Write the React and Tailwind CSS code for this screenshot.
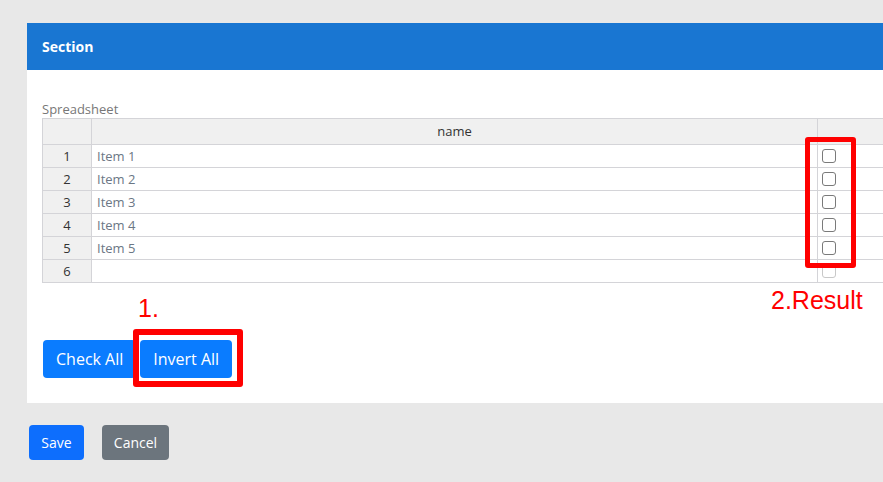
import React from "react";

const items = ["Item 1", "Item 2", "Item 3", "Item 4", "Item 5", ""];

export default function App() {
  return (
    <div
      className="w-[883px] h-[482px] overflow-hidden bg-[#e8e8e8] relative"
      style={{ fontFamily: '"Open Sans", "Noto Sans", sans-serif' }}
    >
      <div className="pt-[23px] pl-[27px]">
        <div className="w-[900px] bg-white">
          <div className="h-[47px] bg-[#1976d2] flex items-center px-[15px]">
            <span className="text-white font-bold text-[14px]">Section</span>
          </div>
          <div className="pt-[31px] pl-[15px] pb-[25px] relative">
            <div className="text-[13px] text-[#777] leading-[17px]">Spreadsheet</div>
            <table className="border-collapse text-[13px] table-fixed w-[845px]">
              <colgroup>
                <col className="w-[49px]" />
                <col className="w-[726px]" />
                <col className="w-[70px]" />
              </colgroup>
              <thead>
                <tr className="h-[26px] bg-[#f0f0f0]">
                  <th className="border border-[#d4d4d8] font-normal"></th>
                  <th className="border border-[#d4d4d8] font-normal text-[#333] text-center pt-[1px]">name</th>
                  <th className="border border-[#d4d4d8] font-normal"></th>
                </tr>
              </thead>
              <tbody>
                {items.map((it, i) => (
                  <tr key={i} className="h-[23px]">
                    <td className="border border-[#d4d4d8] bg-[#f0f0f0] text-center text-[#333] p-0 pt-[1px]">{i + 1}</td>
                    <td className="border border-[#d4d4d8] text-[#6b7785] pl-[5px] p-0 pt-[1px]">{it}</td>
                    <td className="border border-[#d4d4d8] p-0">
                      <div className="pl-[4px] flex items-center">
                        <span
                          className={
                            i === 5
                              ? "block w-[14px] h-[14px] rounded-[3px] border border-[#c8c8c8] bg-white"
                              : "block w-[14px] h-[14px] rounded-[3px] border border-[#7a7a7a] bg-white"
                          }
                        />
                      </div>
                    </td>
                  </tr>
                ))}
              </tbody>
            </table>

            <div className="flex items-center gap-[4px] mt-[57px] pl-[1px]">
              <button className="h-[38px] px-[13px] rounded-[4px] bg-[#0a7cff] text-white text-[16px]">Check All</button>
              <button className="h-[38px] px-[13px] rounded-[4px] bg-[#0a7cff] text-white text-[16px]">Invert All</button>
            </div>

            {/* annotations */}
            <div
              className="absolute left-[111px] top-[226px] text-[25px] text-[#ff0000] leading-none"
              style={{ fontFamily: '"Liberation Sans", Arial, sans-serif' }}
            >
              1.
            </div>
            <div className="absolute left-[106px] top-[259px] w-[110px] h-[58px] border-[6px] border-[#ff0000] rounded-[3px]" />
            <div
              className="absolute left-[744px] top-[218px] text-[25px] text-[#ff0000] leading-none"
              style={{ fontFamily: '"Liberation Sans", Arial, sans-serif' }}
            >
              2.Result
            </div>
            <div className="absolute left-[778px] top-[67px] w-[51px] h-[131px] border-[5px] border-[#ff0000] rounded-[3px]" />
          </div>
        </div>
      </div>

      <div className="flex items-center gap-[18px] pl-[29px] pt-[22px]">
        <button className="h-[35px] w-[55px] rounded-[4px] bg-[#0d6efd] text-white text-[14px]">Save</button>
        <button className="h-[35px] w-[67px] rounded-[4px] bg-[#6c757d] text-white text-[14px]">Cancel</button>
      </div>
    </div>
  );
}
